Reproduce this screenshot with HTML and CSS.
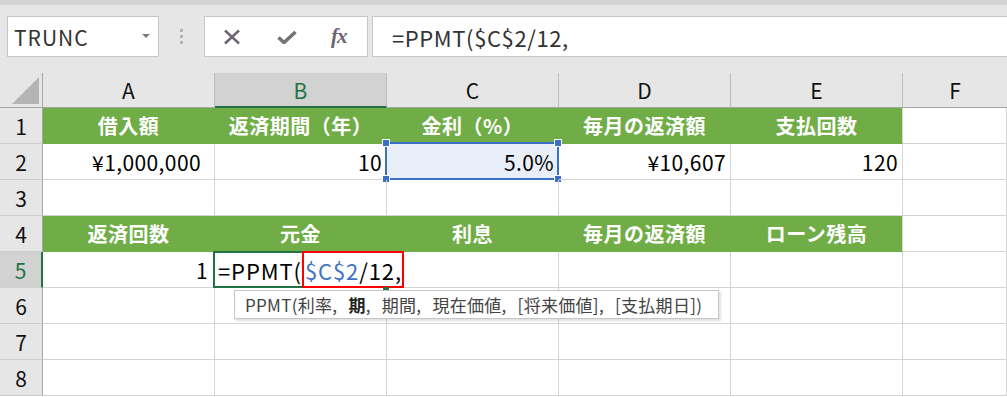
FILE: index.html
```html
<!DOCTYPE html>
<html lang="ja">
<head>
<meta charset="utf-8">
<title>PPMT</title>
<link rel="stylesheet" href="styles.css">
</head>
<body>
<div class="app">
  <div class="topstrip"></div>
  <div class="toolbar">
    <div class="namebox"><span class="nb-text">TRUNC</span><span class="nb-arrow"></span></div>
    <div class="grip"><i></i><i></i><i></i></div>
    <div class="btns">
      <svg class="ic ic-x" width="18" height="16" viewBox="0 0 18 16"><path d="M2 1.5 L16 14.5 M16 1.5 L2 14.5" stroke="#6b6370" stroke-width="2.4" fill="none"/></svg>
      <svg class="ic ic-ok" width="20" height="14" viewBox="0 0 20 14"><path d="M1.5 7.5 L7 12.5 L18.5 2" stroke="#737373" stroke-width="3.6" fill="none" stroke-linejoin="miter"/></svg>
      <span class="ic-fx">fx</span>
    </div>
    <div class="fbox">=PPMT($C$2/12,</div>
  </div>
  <div class="sheet">
    <div class="ch corner"><span class="tri"></span></div>
    <div class="ch">A</div>
    <div class="ch on">B</div>
    <div class="ch">C</div>
    <div class="ch">D</div>
    <div class="ch">E</div>
    <div class="ch last">F</div>

    <div class="rh">1</div>
    <div class="c g">借入額</div>
    <div class="c g">返済期間（年）</div>
    <div class="c g">金利（%）</div>
    <div class="c g">毎月の返済額</div>
    <div class="c g ge">支払回数</div>
    <div class="c"></div>

    <div class="rh">2</div>
    <div class="c r cur">¥1,000,000</div>
    <div class="c r">10</div>
    <div class="c r selc"><span class="sel"><b class="h tl"></b><b class="h tr"></b><b class="h bl"></b><b class="h br"></b></span><span class="v">5.0%</span></div>
    <div class="c r">¥10,607</div>
    <div class="c r">120</div>
    <div class="c"></div>

    <div class="rh">3</div>
    <div class="c"></div><div class="c"></div><div class="c"></div><div class="c"></div><div class="c"></div><div class="c"></div>

    <div class="rh">4</div>
    <div class="c g">返済回数</div>
    <div class="c g">元金</div>
    <div class="c g">利息</div>
    <div class="c g">毎月の返済額</div>
    <div class="c g ge">ローン残高</div>
    <div class="c"></div>

    <div class="rh on">5</div>
    <div class="c r one">1</div>
    <div class="c act">
      <span class="actb"></span>
      <span class="edit"><span class="eq">=PPMT(</span><span class="redbox"><span class="ref">$C$2</span>/12,</span></span>
      <span class="fill"></span>
      <span class="tip">PPMT(利率,<span class="sp"></span><b>期</b>,<span class="sp"></span>期間,<span class="sp"></span>現在価値,<span class="sp"></span>[将来価値],<span class="sp"></span>[支払期日])</span>
    </div>
    <div class="c"></div><div class="c"></div><div class="c"></div><div class="c"></div>

    <div class="rh">6</div>
    <div class="c"></div><div class="c"></div><div class="c"></div><div class="c"></div><div class="c"></div><div class="c"></div>
    <div class="rh">7</div>
    <div class="c"></div><div class="c"></div><div class="c"></div><div class="c"></div><div class="c"></div><div class="c"></div>
    <div class="rh">8</div>
    <div class="c"></div><div class="c"></div><div class="c"></div><div class="c"></div><div class="c"></div><div class="c"></div>
  </div>
</div>
</body>
</html>
```
FILE: styles.css
```css
html, body {
  margin: 0;
  padding: 0;
  background: #ffffff;
}
body {
  width: 1007px;
  height: 397px;
  overflow: hidden;
  font-family: "Noto Sans CJK JP", "Noto Sans", sans-serif;
  color: #000;
}
.app {
  width: 1007px;
}
.topstrip {
  height: 5px;
  background: #d4d4d4;
}
.toolbar {
  height: 68px;
  box-sizing: border-box;
  background: #e6e6e6;
  padding-top: 11px;
  display: flex;
  align-items: flex-start;
}
.namebox {
  margin-left: 7px;
  width: 152px;
  height: 41px;
  box-sizing: border-box;
  border: 1px solid #c6c6c6;
  background: #fff;
  display: flex;
  align-items: center;
  justify-content: space-between;
  padding: 0 8px 0 6px;
}
.nb-text {
  font-size: 21px;
  color: #333;
  letter-spacing: 1px;
}
.nb-arrow {
  width: 0;
  height: 0;
  border-left: 4px solid transparent;
  border-right: 4px solid transparent;
  border-top: 4px solid #7a7a7a;
  margin-top: -2px;
}
.grip {
  width: 45px;
  display: flex;
  flex-direction: column;
  align-items: center;
  gap: 3px;
  padding-top: 13px;
  box-sizing: border-box;
}
.grip i {
  display: block;
  width: 3px;
  height: 3px;
  background: #b2b2b2;
}
.btns {
  width: 164px;
  height: 41px;
  box-sizing: border-box;
  border: 1px solid #c6c6c6;
  background: #fff;
  display: flex;
  align-items: center;
  padding-left: 18px;
}
.ic-x { margin-right: 36px; }
.ic-ok { margin-right: 34px; }
.ic-fx {
  font-family: "Liberation Serif", "DejaVu Serif", serif;
  font-style: italic;
  font-weight: bold;
  font-size: 21px;
  color: #6b6370;
  letter-spacing: -1px;
}
.fbox {
  margin-left: 4px;
  flex: 1;
  height: 41px;
  box-sizing: border-box;
  border: 1px solid #c6c6c6;
  border-right: none;
  background: #fff;
  display: flex;
  align-items: center;
  padding-left: 19px;
  font-size: 22px;
  color: #333;
  letter-spacing: 0.6px;
  white-space: pre;
}
.sheet {
  display: grid;
  grid-template-columns: 43px 172px 172px 172px 172px 172px 104px;
  grid-template-rows: 35px repeat(8, 36px);
  background: #fff;
}
.ch {
  background: #e6e6e6;
  border-right: 1px solid #bcbcbc;
  border-bottom: 1px solid #a6a6a6;
  box-sizing: border-box;
  display: flex;
  align-items: center;
  justify-content: center;
  font-size: 21px;
  color: #111;
}
.ch.last { border-right: none; }
.ch.on {
  background: #d2d2d2;
  color: #217346;
  border-bottom: 2px solid #217346;
}
.corner {
  position: relative;
  border-right: 1px solid #a6a6a6;
}
.corner .tri {
  position: absolute;
  right: 3px;
  bottom: 3px;
  width: 0;
  height: 0;
  border-left: 27px solid transparent;
  border-bottom: 27px solid #b4b4b4;
}
.rh {
  background: #e6e6e6;
  border-right: 1px solid #a6a6a6;
  border-bottom: 1px solid #cfcfcf;
  box-sizing: border-box;
  display: flex;
  align-items: center;
  justify-content: center;
  font-size: 21px;
  color: #111;
}
.rh.on {
  background: #d2d2d2;
  color: #217346;
  border-right: 2px solid #217346;
}
.c {
  border-right: 1px solid #d4d4d4;
  border-bottom: 1px solid #d4d4d4;
  box-sizing: border-box;
  display: flex;
  align-items: center;
  font-size: 21px;
  padding: 0 4px;
  white-space: nowrap;
  position: relative;
  letter-spacing: 0.4px;
}
.c.g {
  background: #70ad47;
  border-right-color: #70ad47;
  border-bottom-color: #70ad47;
  color: #fff;
  font-weight: bold;
  justify-content: center;
  font-size: 20px;
  letter-spacing: 0.5px;
}
.c.g.ge { border-right-color: #d4d4d4; }
.c.r { justify-content: flex-end; }
.c.cur { padding-right: 13px; }
.c.one { padding-right: 6px; }
.selc { background: #e8eff9; }
.sel {
  position: absolute;
  left: -2px;
  top: -2px;
  right: -1px;
  bottom: -1px;
  border: 2px solid #3b70c9;
}
.h {
  position: absolute;
  width: 6px;
  height: 6px;
  background: #3b70c9;
  border: 1px solid #fff;
}
.h.tl { left: -5px; top: -5px; }
.h.tr { right: -5px; top: -5px; }
.h.bl { left: -5px; bottom: -5px; }
.h.br { right: -5px; bottom: -5px; }
.v { position: relative; }
.act { padding: 0; overflow: visible; z-index: 2; }
.actb {
  position: absolute;
  left: -2px;
  top: -1px;
  width: 173px;
  height: 37px;
  box-sizing: border-box;
  border: 2px solid #217346;
}
.fill {
  position: absolute;
  left: 168px;
  top: 35px;
  width: 6px;
  height: 5px;
  background: #217346;
}
.edit {
  position: absolute;
  left: 3px;
  top: -1px;
  height: 37px;
  display: flex;
  align-items: center;
  font-size: 22px;
  letter-spacing: 0.9px;
  color: #000;
}
.redbox {
  height: 37px;
  box-sizing: border-box;
  border: 2px solid #ff0000;
  display: flex;
  align-items: center;
  padding-left: 1px;
  padding-right: 0;
  background: #fff;
}
.ref { color: #4472c4; }
.tip {
  position: absolute;
  left: 19px;
  top: 38px;
  width: 485px;
  height: 29px;
  box-sizing: border-box;
  border: 1px solid #c6c6c6;
  background: #fff;
  box-shadow: 2px 2px 2px rgba(0,0,0,0.12);
  display: flex;
  align-items: center;
  padding-left: 10px;
  font-size: 17px;
  color: #444;
  letter-spacing: 0.3px;
}
.tip .sp {
  display: inline-block;
  width: 11px;
}
.tip b { font-weight: bold; color: #222; }
```
